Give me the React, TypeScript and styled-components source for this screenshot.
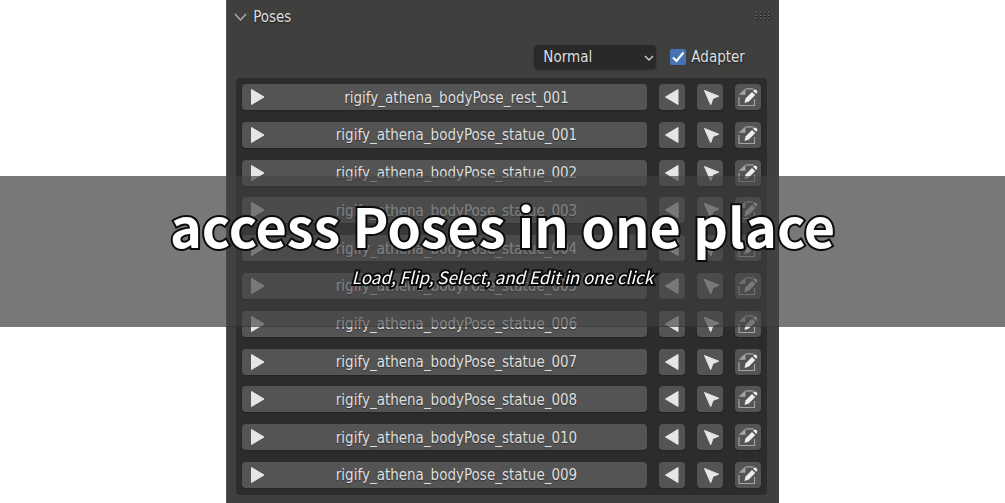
import React from 'react';
import styled, { createGlobalStyle } from 'styled-components';

const GlobalStyle = createGlobalStyle`
  * { box-sizing: border-box; }
  body {
    margin: 0;
    background: #ffffff;
    font-family: "DejaVu Sans Condensed", "DejaVu Sans", sans-serif;
    font-stretch: condensed;
    font-size: 15px;
    color: #dedede;
  }
  button, select { font: inherit; color: inherit; }
`;

const Page = styled.div`
  position: relative;
  display: flex;
  justify-content: center;
  height: 100vh;
  min-height: 500px;
  overflow: hidden;
`;

const Panel = styled.main`
  display: flex;
  flex-direction: column;
  width: 55%;
  min-width: 480px;
  padding: 0 12px 8px 9px;
  background: #3f3f3d;
  border-left: 1px solid #525252;
`;

const Header = styled.header`
  display: flex;
  align-items: center;
  justify-content: space-between;
  height: 32px;
  margin: 0 -4px 0 -2px;
`;

const Disclosure = styled.button`
  display: flex;
  align-items: center;
  gap: 6px;
  padding: 2px 0 0;
  border: 0;
  background: none;
  text-shadow: 0 1px 2px #1c1c1c;
`;

const Options = styled.div`
  display: flex;
  align-items: center;
  justify-content: flex-end;
  gap: 14px;
  height: 46px;
  padding: 4px 22px 0 0;
`;

const SelectBox = styled.div`
  position: relative;
  display: flex;
  width: 122px;
  svg {
    position: absolute;
    right: 2px;
    top: 9px;
    pointer-events: none;
  }
`;

const Select = styled.select`
  width: 100%;
  height: 24px;
  padding: 0 9px;
  appearance: none;
  border: 0;
  border-radius: 4px;
  background: #292929;
  box-shadow: 0 1px 2px #2c2c2c;
`;

const CheckLabel = styled.label`
  display: flex;
  align-items: center;
  gap: 5px;
  text-shadow: 0 1px 2px #1c1c1c;
`;

const CheckFrame = styled.span`
  position: relative;
  display: flex;
  svg {
    position: absolute;
    inset: 0;
    pointer-events: none;
  }
`;

const Checkbox = styled.input`
  width: 16px;
  height: 16px;
  margin: 0;
  appearance: none;
  border-radius: 2px;
  background: #3f3f3d;
  &:checked { background: #4772b3; }
`;

const List = styled.ul`
  flex: 1;
  display: flex;
  flex-direction: column;
  justify-content: space-between;
  margin: 0;
  padding: 6px 6px 7px;
  list-style: none;
  border-radius: 4px;
  background: #2c2c2c;
`;

const Row = styled.li`
  display: flex;
  gap: 12px;
`;

const Button = styled.button<{ $wide?: boolean }>`
  position: relative;
  display: flex;
  align-items: center;
  justify-content: center;
  flex: ${(p) => (p.$wide ? '1' : '0 0 26px')};
  height: 26px;
  padding: ${(p) => (p.$wide ? '1px 2px 0 26px' : '0')};
  border: 0;
  border-radius: 4px;
  background: #545454;
  box-shadow: 0 1px 1px #242424;
  text-shadow: 0 1px 1px #333333;
`;

const PlayIcon = styled.svg`
  position: absolute;
  left: 8px;
  top: 4px;
`;

const Banner = styled.section`
  position: absolute;
  top: 35%;
  left: 0;
  right: 0;
  height: 30%;
  display: flex;
  flex-direction: column;
  align-items: center;
  justify-content: center;
  gap: 4px;
  padding-bottom: 16px;
  background: rgba(54, 53, 54, 0.67);
  backdrop-filter: brightness(1.4);
  font-family: "Noto Sans CJK SC", sans-serif;
  font-stretch: normal;
  color: #ffffff;
  white-space: nowrap;
  paint-order: stroke fill;
`;

const Title = styled.h1`
  margin: 0;
  font-size: 54px;
  line-height: 64px;
  font-weight: 700;
  -webkit-text-stroke: 4px #0c0c0c;
`;

const Subtitle = styled.p`
  margin: 0;
  font-size: 17px;
  line-height: 32px;
  font-style: italic;
  -webkit-text-stroke: 4px #0c0c0c;
`;

const poses = [
  'rest_001', 'statue_001', 'statue_002', 'statue_003', 'statue_004', 'statue_005',
  'statue_006', 'statue_007', 'statue_008', 'statue_010', 'statue_009',
];

const Grip = () => (
  <svg width="16" height="8" viewBox="0 0 16 8" aria-hidden="true">
    {[0, 4, 8, 12].map((x) => [0, 3, 6].map((y) => (
      <g key={`${x}-${y}`}>
        <rect x={x + 1} y={y + 1} width="2" height="1" fill="#222" />
        <rect x={x + 1} y={y} width="1" height="1" fill="#777" />
      </g>
    )))}
  </svg>
);

const FlipIcon = () => (
  <svg width="26" height="26" viewBox="0 0 26 26" aria-hidden="true">
    <path d="M6.500 13 19 5.500v15z" fill="#e6e6e6" stroke="#e6e6e6" strokeLinejoin="round" />
  </svg>
);

const SelectIcon = () => (
  <svg width="26" height="26" viewBox="0 0 26 26" aria-hidden="true">
    <path d="M7.500 6.500 21.700 12.200 16 14.400 13.700 20.700z" fill="#e6e6e6" stroke="#e6e6e6" strokeLinejoin="round" />
  </svg>
);

const EditIcon = () => (
  <svg width="26" height="26" viewBox="0 0 26 26" aria-hidden="true">
    <path d="M11 4.800h7.500M4 13v8.500h15.500V15" fill="none" stroke="#a4a4a4" strokeWidth="1.200" />
    <path d="M10.500 4.300v6.500H3.800z" fill="#a4a4a4" />
    <path d="M9.500 19 10.500 14.500 17 7.900 20.200 10.900 13.900 17.600z" fill="#eeeeee" />
    <path d="M18 6.800 19.100 5.700Q20.200 5 21.600 6.300 22.800 7.700 22.100 8.700L21.100 9.800z" fill="#eeeeee" />
  </svg>
);

export default function App() {
  return (
    <>
      <GlobalStyle />
      <Page>
        <Panel>
          <Header>
            <Disclosure aria-expanded="true">
              <svg width="13" height="9" viewBox="0 0 13 9" aria-hidden="true">
                <path d="m1 1 5.500 6L12 1" fill="none" stroke="#b0b0b0" strokeWidth="1.400" />
              </svg>
              Poses
            </Disclosure>
            <Grip />
          </Header>
          <Options>
            <SelectBox>
              <Select aria-label="Mode" defaultValue="Normal">
                <option>Normal</option>
              </Select>
              <svg width="10" height="8" viewBox="0 0 10 8" aria-hidden="true">
                <path d="m1 2 4 4 4-4" fill="none" stroke="#c8c8c8" strokeWidth="1.500" />
              </svg>
            </SelectBox>
            <CheckLabel>
              <CheckFrame>
                <Checkbox type="checkbox" defaultChecked />
                <svg width="16" height="16" viewBox="0 0 16 16" aria-hidden="true">
                  <path d="m3 8.500 3.500 3.500 7-8.500" fill="none" stroke="#fff" strokeWidth="2" />
                </svg>
              </CheckFrame>
              Adapter
            </CheckLabel>
          </Options>
          <List>
            {poses.map((pose) => (
              <Row key={pose}>
                <Button $wide>
                  <PlayIcon width="18" height="18" viewBox="0 0 18 18" aria-hidden="true">
                    <path d="M1.500 1.500 14 9 1.500 16.500z" fill="#e6e6e6" stroke="#e6e6e6" strokeLinejoin="round" />
                  </PlayIcon>
                  rigify_athena_bodyPose_{pose}
                </Button>
                <Button aria-label="Flip"><FlipIcon /></Button>
                <Button aria-label="Select"><SelectIcon /></Button>
                <Button aria-label="Edit"><EditIcon /></Button>
              </Row>
            ))}
          </List>
        </Panel>
        <Banner>
          <Title>access Poses in one place</Title>
          <Subtitle>Load, Flip, Select, and Edit in one click</Subtitle>
        </Banner>
      </Page>
    </>
  );
}
